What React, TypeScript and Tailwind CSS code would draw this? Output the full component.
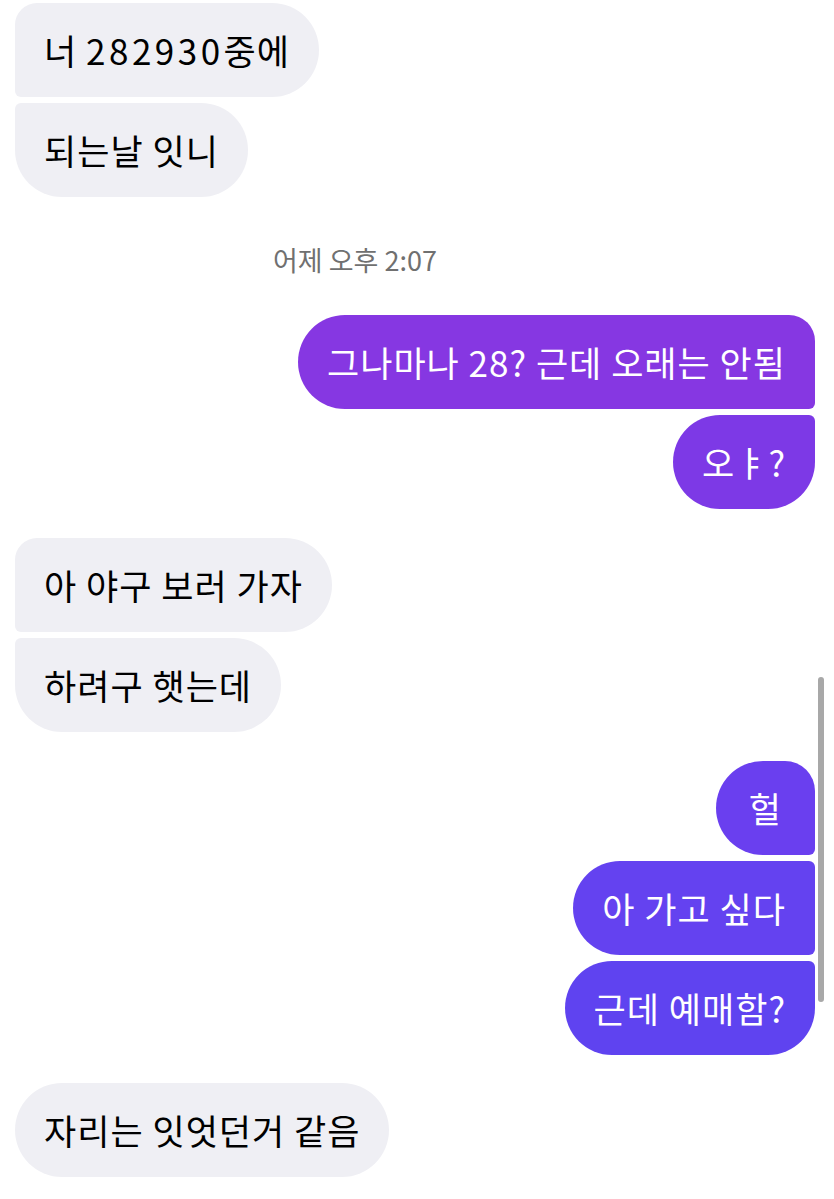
import React from "react";

const font = { fontFamily: '"Noto Sans CJK KR", "Noto Sans", sans-serif' };

function Left({ children, cls }: { children: React.ReactNode; cls: string }) {
  return (
    <div className="flex justify-start">
      <div className={`h-[94px] flex items-center px-[29px] bg-[#efeff4] text-black text-[35px] tracking-[1px] ${cls}`}>
        {children}
      </div>
    </div>
  );
}

function Right({ children, cls }: { children: React.ReactNode; cls: string }) {
  return (
    <div className="flex justify-end">
      <div className={`h-[94px] flex items-center text-white text-[35px] tracking-[1px] ${cls}`}>
        {children}
      </div>
    </div>
  );
}

export default function App() {
  return (
    <div className="relative w-[834px] h-[1199px] bg-white overflow-hidden" style={font}>
      <div className="flex flex-col pl-[15px] pr-[19px] pt-[3px]">
        <div className="flex flex-col gap-[6px]">
          <Left cls="rounded-tl-[22px] rounded-bl-[6px] rounded-r-[47px]">
            <span>
              너 <span className="tracking-[3.5px]">282930</span>중에
            </span>
          </Left>
          <Left cls="rounded-tl-[6px] rounded-bl-[47px] rounded-r-[47px]">되는날 잇니</Left>
        </div>
        <div className="h-[118px] flex items-center justify-center pr-[120px]">
          <span className="text-[27px] text-[#707070] mt-[8px]">어제 오후 2:07</span>
        </div>
        <div className="flex flex-col gap-[6px]">
          <Right cls="px-[29px] bg-[#8637e2] rounded-tr-[26px] rounded-br-[6px] rounded-l-[47px]">그나마나 28? 근데 오래는 안됨</Right>
          <Right cls="px-[29px] bg-[#7d39e6] rounded-tr-[6px] rounded-br-[47px] rounded-l-[47px]">오ㅑ?</Right>
        </div>
        <div className="flex flex-col gap-[6px] mt-[29px]">
          <Left cls="rounded-tl-[22px] rounded-bl-[6px] rounded-r-[47px]">아 야구 보러 가자</Left>
          <Left cls="rounded-tl-[6px] rounded-bl-[47px] rounded-r-[47px]">하려구 햇는데</Left>
        </div>
        <div className="flex flex-col gap-[6px] mt-[29px]">
          <Right cls="px-[33px] bg-[#6a3fef] rounded-tr-[30px] rounded-br-[6px] rounded-l-[47px]">헐</Right>
          <Right cls="px-[29px] bg-[#6442f0] rounded-tr-[6px] rounded-br-[6px] rounded-l-[47px]">아 가고 싶다</Right>
          <Right cls="px-[29px] bg-[#5f43f0] rounded-tr-[6px] rounded-br-[47px] rounded-l-[47px]">근데 예매함?</Right>
        </div>
        <div className="flex flex-col gap-[6px] mt-[28px]">
          <Left cls="rounded-[47px]">자리는 잇엇던거 같음</Left>
        </div>
      </div>
      <div className="absolute left-[818px] top-[677px] w-[6px] h-[325px] rounded-full bg-[#a8a8a8]" />
    </div>
  );
}
